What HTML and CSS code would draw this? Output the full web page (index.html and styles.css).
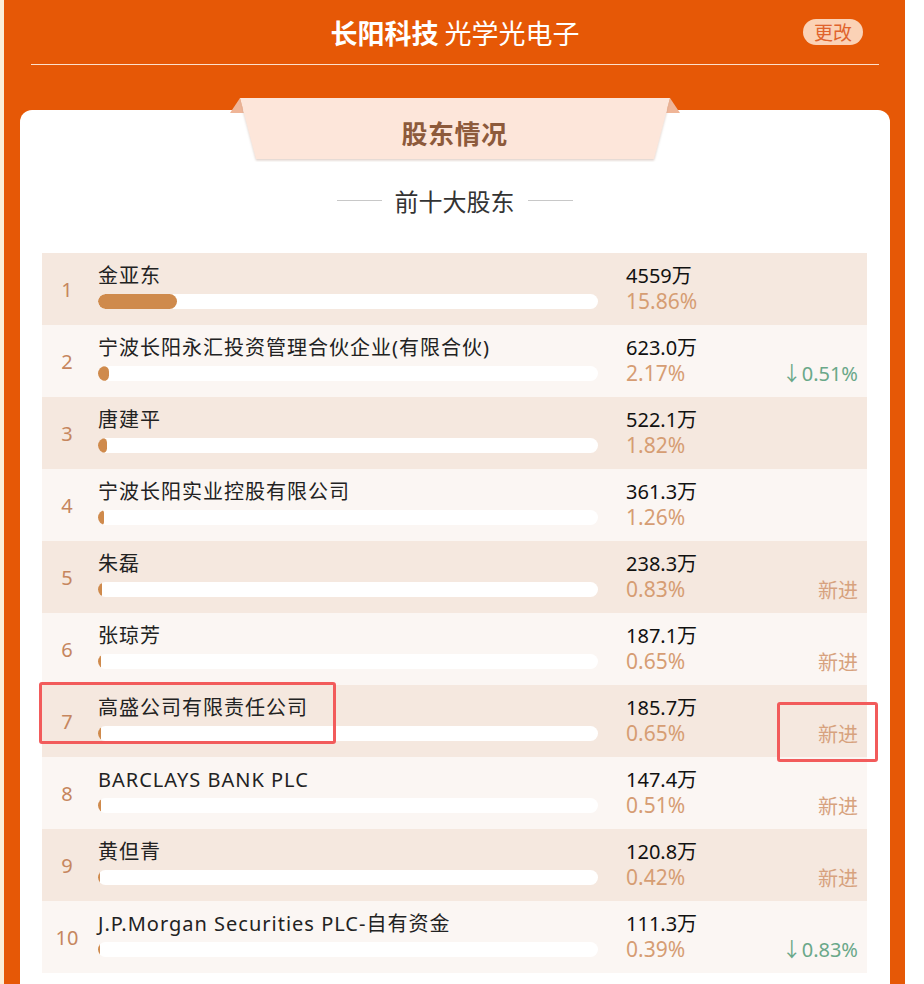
FILE: index.html
```html
<!DOCTYPE html>
<html lang="zh-CN">
<head>
<meta charset="utf-8">
<title>长阳科技 股东情况</title>
<link rel="stylesheet" href="styles.css">
</head>
<body>
<div class="panel">
  <header class="header">
    <div class="spacer"></div>
    <h1 class="title"><b>长阳科技</b> <span class="industry">光学光电子</span></h1>
    <button class="change-btn">更改</button>
  </header>
  <section class="card">
    <div class="ribbon">
      <svg class="ribbon-shape" width="450" height="64" viewBox="0 0 450 64">
        <defs>
          <filter id="sh" x="-5%" y="-10%" width="110%" height="130%">
            <feDropShadow dx="0" dy="1.5" stdDeviation="1.2" flood-color="#b89a8a" flood-opacity="0.45"/>
          </filter>
        </defs>
        <polygon points="0,15 10,0 14,15" fill="#efb597"/>
        <polygon points="450,15 440,0 436,15" fill="#efb597"/>
        <polygon points="10,0 440,0 424,61 26,61" fill="#fde6da" filter="url(#sh)"/>
      </svg>
      <span class="ribbon-text">股东情况</span>
    </div>
    <div class="subtitle"><span class="rule"></span><span>前十大股东</span><span class="rule"></span></div>
    <div class="table">
      <div class="row odd">
        <div class="rank">1</div>
        <div class="main"><div class="name">金亚东</div><div class="bar"><div class="fill" style="width:15.86%"></div></div></div>
        <div class="stats"><div class="amount">4559万</div><div class="pct">15.86%</div></div>
        <div class="change"></div>
      </div>
      <div class="row even">
        <div class="rank">2</div>
        <div class="main"><div class="name">宁波长阳永汇投资管理合伙企业(有限合伙)</div><div class="bar"><div class="fill" style="width:2.17%"></div></div></div>
        <div class="stats"><div class="amount">623.0万</div><div class="pct">2.17%</div></div>
        <div class="change down">↓0.51%</div>
      </div>
      <div class="row odd">
        <div class="rank">3</div>
        <div class="main"><div class="name">唐建平</div><div class="bar"><div class="fill" style="width:1.82%"></div></div></div>
        <div class="stats"><div class="amount">522.1万</div><div class="pct">1.82%</div></div>
        <div class="change"></div>
      </div>
      <div class="row even">
        <div class="rank">4</div>
        <div class="main"><div class="name">宁波长阳实业控股有限公司</div><div class="bar"><div class="fill" style="width:1.26%"></div></div></div>
        <div class="stats"><div class="amount">361.3万</div><div class="pct">1.26%</div></div>
        <div class="change"></div>
      </div>
      <div class="row odd">
        <div class="rank">5</div>
        <div class="main"><div class="name">朱磊</div><div class="bar"><div class="fill" style="width:0.83%"></div></div></div>
        <div class="stats"><div class="amount">238.3万</div><div class="pct">0.83%</div></div>
        <div class="change new">新进</div>
      </div>
      <div class="row even">
        <div class="rank">6</div>
        <div class="main"><div class="name">张琼芳</div><div class="bar"><div class="fill" style="width:0.65%"></div></div></div>
        <div class="stats"><div class="amount">187.1万</div><div class="pct">0.65%</div></div>
        <div class="change new">新进</div>
      </div>
      <div class="row odd marked">
        <div class="rank">7</div>
        <div class="main"><div class="name">高盛公司有限责任公司</div><div class="bar"><div class="fill" style="width:0.65%"></div></div></div>
        <div class="stats"><div class="amount">185.7万</div><div class="pct">0.65%</div></div>
        <div class="change new">新进</div>
        <div class="mark mark-name"></div>
        <div class="mark mark-new"></div>
      </div>
      <div class="row even">
        <div class="rank">8</div>
        <div class="main"><div class="name">BARCLAYS BANK PLC</div><div class="bar"><div class="fill" style="width:0.51%"></div></div></div>
        <div class="stats"><div class="amount">147.4万</div><div class="pct">0.51%</div></div>
        <div class="change new">新进</div>
      </div>
      <div class="row odd">
        <div class="rank">9</div>
        <div class="main"><div class="name">黄但青</div><div class="bar"><div class="fill" style="width:0.42%"></div></div></div>
        <div class="stats"><div class="amount">120.8万</div><div class="pct">0.42%</div></div>
        <div class="change new">新进</div>
      </div>
      <div class="row even">
        <div class="rank">10</div>
        <div class="main"><div class="name">J.P.Morgan Securities PLC-自有资金</div><div class="bar"><div class="fill" style="width:0.39%"></div></div></div>
        <div class="stats"><div class="amount">111.3万</div><div class="pct">0.39%</div></div>
        <div class="change down">↓0.83%</div>
      </div>
    </div>
  </section>
</div>
</body>
</html>
```
FILE: styles.css
```css
* { box-sizing: border-box; }
html, body { margin: 0; padding: 0; }
body {
  background: #ffffff;
  font-family: "Noto Sans", "Noto Sans CJK SC", sans-serif;
  height: 984px;
  overflow: hidden;
  border-left: 4px solid #fbeed8;
}
.panel {
  width: 901px;
  min-height: 984px;
  background: #e65806;
  padding: 0 15px 0 16px;
  display: flow-root;
}
.header {
  display: grid;
  grid-template-columns: 1fr auto 1fr;
  margin: 0 11px;
  padding: 15px 0 13px;
  border-bottom: 1px solid rgba(255, 240, 225, 0.9);
}
.title {
  margin: 0;
  font-family: "Noto Sans CJK SC", sans-serif;
  font-size: 27px;
  line-height: 36px;
  color: #ffffff;
  font-weight: 400;
  white-space: nowrap;
}
.title b { font-weight: 700; }
.change-btn {
  justify-self: end;
  align-self: start;
  margin: 4px 16px 0 0;
  width: 60px;
  height: 26px;
  border: 0;
  border-radius: 13px;
  background: #fbd2b6;
  color: #e0632c;
  font-family: "Noto Sans CJK SC", sans-serif;
  font-size: 19px;
  line-height: 26px;
  padding: 0;
}
.card {
  display: flow-root;
  margin-top: 45px;
  background: #ffffff;
  border-radius: 12px 12px 0 0;
  padding: 0 23px 40px 22px;
  min-height: 900px;
}
.ribbon {
  position: relative;
  width: 450px;
  height: 61px;
  margin: -12px auto 0;
  display: flex;
  align-items: center;
  justify-content: center;
}
.ribbon-shape {
  position: absolute;
  left: 0;
  top: 0;
}
.ribbon-text {
  position: relative;
  font-family: "Noto Sans CJK SC", sans-serif;
  font-weight: 700;
  font-size: 26px;
  color: #8d5a3b;
  letter-spacing: 0.5px;
  margin-top: 8px;
}
.subtitle {
  display: flex;
  align-items: center;
  justify-content: center;
  gap: 13px;
  margin-top: 26px;
  height: 30px;
  font-family: "Noto Sans CJK SC", sans-serif;
  font-size: 24px;
  color: #333333;
}
.rule {
  width: 45px;
  height: 1px;
  background: #c8c8c8;
}
.table { margin-top: 38px; }
.row {
  position: relative;
  display: flex;
  height: 72px;
}
.row.odd { background: #f5e8df; }
.row.even { background: #fbf6f3; }
.row.marked { z-index: 2; }
.rank {
  width: 50px;
  text-align: center;
  align-self: center;
  margin-top: 1px;
  font-size: 20px;
  color: #c6865e;
}
.main {
  width: 500px;
  margin-left: 6px;
  padding-top: 11px;
}
.name {
  font-size: 20px;
  letter-spacing: 1px;
  line-height: 24px;
  color: #222222;
  white-space: nowrap;
}
.bar {
  margin-top: 6px;
  height: 15px;
  background: #ffffff;
  border-radius: 8px;
  overflow: hidden;
}
.fill {
  height: 100%;
  background: #cf8a4c;
  border-radius: 8px;
}
.stats {
  width: 130px;
  margin-left: 28px;
  padding-top: 10px;
}
.amount {
  font-size: 20px;
  line-height: 25px;
  color: #111111;
}
.pct {
  font-size: 21px;
  line-height: 27px;
  color: #d69d73;
}
.change {
  flex: 1;
  text-align: right;
  padding: 35px 9px 0 0;
  font-size: 20px;
  line-height: 28px;
}
.change.down { color: #6aa889; }
.change.new { color: #d7a27e; font-family: "Noto Sans CJK SC", sans-serif; }
.mark {
  position: absolute;
  border: 3px solid #f25b5b;
  border-radius: 3px;
}
.mark-name { left: -3px; top: -3px; width: 297px; height: 62px; }
.mark-new { left: 735px; top: 17px; width: 101px; height: 60px; }
```
